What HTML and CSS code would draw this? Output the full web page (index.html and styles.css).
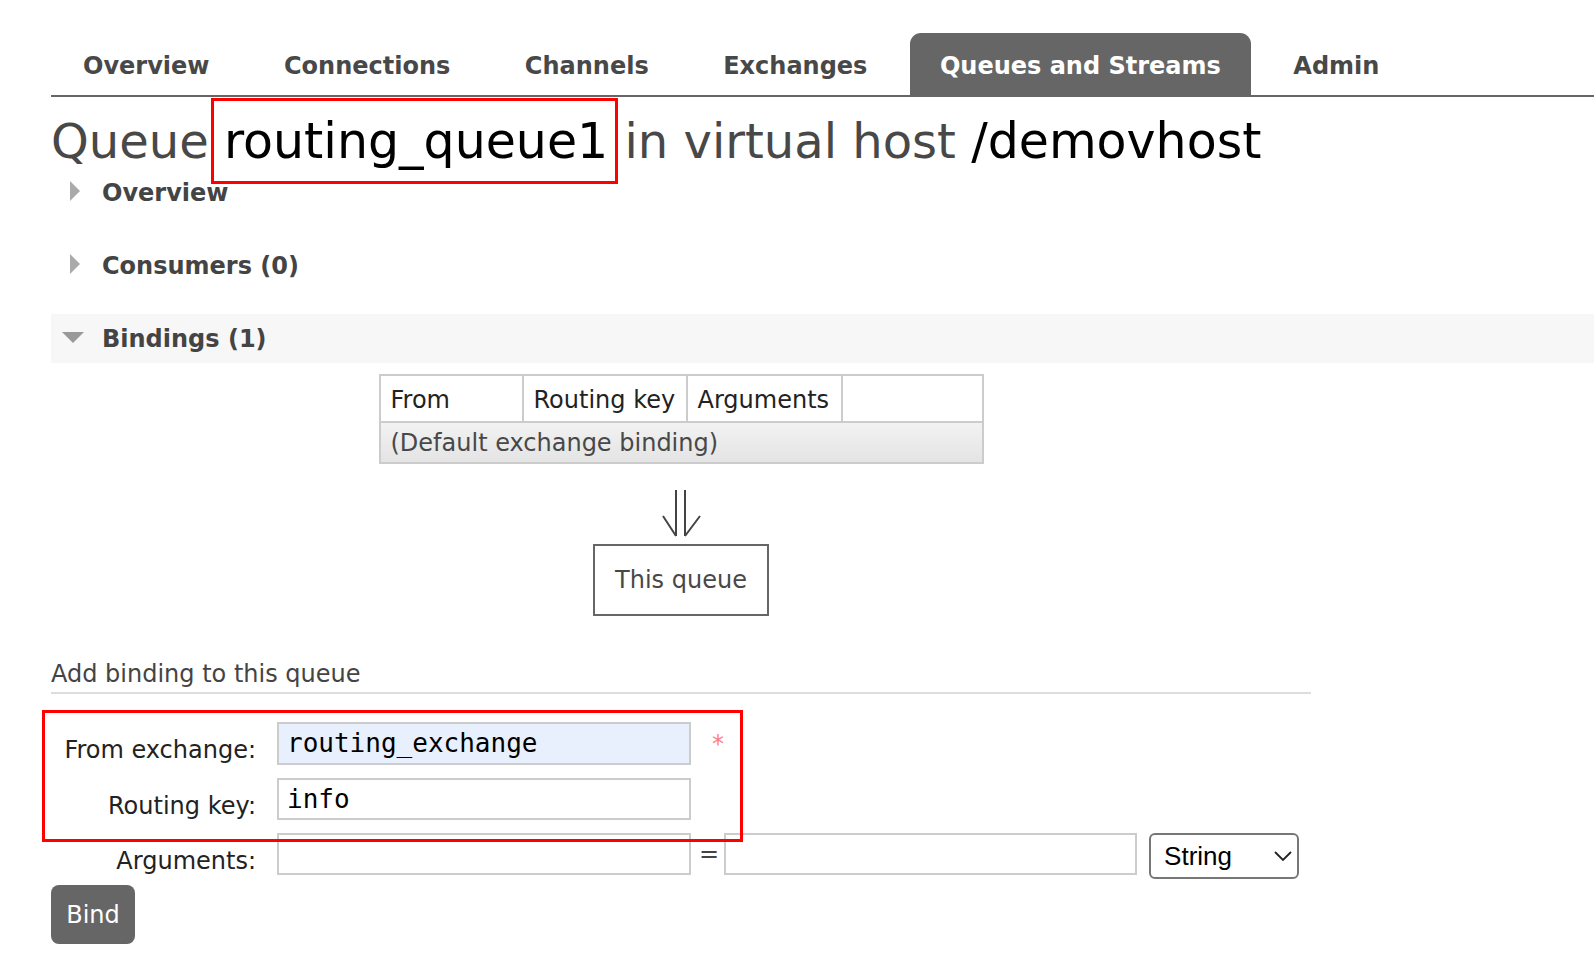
FILE: index.html
```html
<!DOCTYPE html>
<html lang="en">
<head>
<meta charset="utf-8">
<title>Queue routing_queue1</title>
<link rel="stylesheet" href="styles.css">
</head>
<body>
<div class="page">
  <nav class="tabs">
    <a class="tab">Overview</a>
    <a class="tab">Connections</a>
    <a class="tab">Channels</a>
    <a class="tab">Exchanges</a>
    <a class="tab active">Queues and Streams</a>
    <a class="tab">Admin</a>
  </nav>

  <h1 class="title"><span class="muted">Queue</span> <span class="hl">routing_queue1</span> <span class="muted">in virtual host</span> <span class="vh">/demovhost</span></h1>

  <div class="sections">
    <div class="section-head"><span class="tri-right"></span><span>Overview</span></div>
    <div class="section-head"><span class="tri-right"></span><span>Consumers (0)</span></div>
    <div class="section-head open"><span class="tri-down"></span><span>Bindings (1)</span></div>
  </div>

  <div class="bindings">
    <table class="btable">
      <colgroup><col class="c1"><col class="c2"><col class="c3"><col class="c4"></colgroup>
      <thead>
        <tr><th>From</th><th>Routing key</th><th>Arguments</th><th></th></tr>
      </thead>
      <tbody>
        <tr><td colspan="4">(Default exchange binding)</td></tr>
      </tbody>
    </table>
    <svg class="arrow" width="42" height="48" viewBox="0 0 42 48">
      <path d="M16 1 V47 M25 1 V47 M3 27 L16 47 M40 27 L25 47" fill="none" stroke="#444" stroke-width="2"/>
    </svg>
    <div class="this-queue">This queue</div>

    <h3 class="add-title">Add binding to this queue</h3>

    <form class="bind-form">
      <div class="hl-group">
        <div class="row">
          <label class="lbl">From exchange:</label>
          <input class="inp filled" type="text" value="routing_exchange">
          <span class="req">*</span>
        </div>
        <div class="row">
          <label class="lbl">Routing key:</label>
          <input class="inp" type="text" value="info">
        </div>
      </div>
      <div class="row">
        <label class="lbl">Arguments:</label>
        <input class="inp" type="text" value="">
        <span class="eq">=</span>
        <input class="inp inp2" type="text" value="">
        <div class="select-wrap">
          <select class="sel"><option>String</option></select>
          <svg class="chev" width="18" height="10" viewBox="0 0 18 10"><path d="M1 1 L9 9 L17 1" fill="none" stroke="#222" stroke-width="1.8"/></svg>
        </div>
      </div>
      <button type="button" class="bind-btn">Bind</button>
    </form>
  </div>
</div>
</body>
</html>
```

FILE: styles.css
```css
* { box-sizing: border-box; }
html, body { margin: 0; padding: 0; background: #fff; }
body {
  font-family: "DejaVu Sans", Verdana, sans-serif;
  font-size: 24px;
  color: #444;
}
.page { padding-left: 51px; }

/* nav tabs */
.tabs {
  display: flex;
  gap: 10.5px;
  margin-top: 33px;
  border-bottom: 2px solid #666;
}
.tab {
  height: 62px;
  display: flex;
  align-items: center;
  padding: 3px 32px 0;
  font-weight: bold;
  font-size: 24px;
  color: #484848;
}
.tab.active {
  background: #666;
  color: #fff;
  border-radius: 11px 11px 0 0;
  padding: 3px 30px 0;
}

/* title */
.title {
  margin: 17px 0 0;
  font-size: 48px;
  line-height: 54px;
  font-weight: normal;
  color: #000;
  white-space: nowrap;
}
.title .muted { color: #484848; }
.title .vh { font-size: 49px; }
.hl { position: relative; font-size: 49px; margin-right: 1px; }
.hl::after {
  content: "";
  position: absolute;
  left: -13px;
  right: -10px;
  top: -15px;
  bottom: -14px;
  border: 3px solid #f00;
}

/* sections */
.sections { margin-top: -1px; }
.section-head {
  height: 49px;
  display: flex;
  align-items: center;
  font-weight: bold;
  color: #444;
  margin-bottom: 24px;
}
.section-head:last-child { margin-bottom: 0; }
.section-head.open { background: #f7f7f7; }
.tri-right {
  width: 0; height: 0;
  margin-left: 19px;
  margin-right: 22px;
  border-top: 10px solid transparent;
  border-bottom: 10px solid transparent;
  border-left: 10px solid #aaa;
  margin-top: -4px;
}
.tri-down {
  width: 0; height: 0;
  margin-left: 11px;
  margin-right: 18px;
  border-left: 11px solid transparent;
  border-right: 11px solid transparent;
  border-top: 11px solid #999;
  margin-top: -2px;
}

/* bindings */
.bindings { width: 1260px; }
.btable {
  margin: 11px auto 0;
  width: 603px;
  table-layout: fixed;
  border-collapse: collapse;
  border: 2px solid #ccc;
}
.btable .c1 { width: 143px; }
.btable .c2 { width: 164px; }
.btable .c3 { width: 155px; }
.btable .c4 { width: 141px; }
.btable th {
  height: 47px;
  border: 2px solid #ccc;
  text-align: left;
  font-weight: normal;
  color: #222;
  padding: 3px 10px 0;
  white-space: nowrap;
}
.btable td {
  height: 41px;
  padding: 0 10px;
  color: #484848;
  background: linear-gradient(#f2f2f2, #e4e4e4);
  border: 2px solid #ccc;
  white-space: nowrap;
}
.arrow {
  display: block;
  margin: 25px auto 0;
}
.this-queue {
  width: 176px;
  height: 72px;
  margin: 7px auto 0;
  border: 2px solid #666;
  display: flex;
  align-items: center;
  justify-content: center;
  color: #484848;
}
.add-title {
  margin: 44px 0 0;
  font-size: 24px;
  line-height: 28px;
  font-weight: normal;
  color: #444;
  padding-bottom: 4px;
  border-bottom: 2px solid #ddd;
}

/* form */
.bind-form { margin-top: 28px; }
.hl-group { position: relative; }
.hl-group::after {
  content: "";
  position: absolute;
  left: -9px;
  top: -12px;
  width: 695px;
  height: 126px;
  border: 3px solid #f00;
  z-index: 1;
}
.row {
  display: flex;
  align-items: flex-start;
  margin-bottom: 13px;
}
.lbl {
  width: 205px;
  margin-right: 21px;
  text-align: right;
  color: #222;
  line-height: 28px;
  padding-top: 14px;
  white-space: nowrap;
}
.inp {
  width: 414px;
  height: 42px;
  border: 2px solid #ccc;
  padding: 0 8px 1px;
  font-family: "DejaVu Sans Mono", Menlo, monospace;
  font-size: 26px;
  color: #000;
  background: #fff;
  outline: none;
  margin: 0;
}
.inp.filled { background: #e8f0fe; height: 43px; }
.req {
  margin-left: 21px;
  color: #ff8080;
  line-height: 28px;
  padding-top: 8px;
}
.eq {
  margin-left: 8px;
  margin-right: 5px;
  line-height: 42px;
  color: #444;
}
.inp2 { width: 413px; }
.select-wrap {
  position: relative;
  margin-left: 12px;
}
.sel {
  appearance: none;
  -webkit-appearance: none;
  width: 150px;
  height: 46px;
  border: 2px solid #777;
  border-radius: 6px;
  background: #fff;
  font-family: "Liberation Sans", Arial, sans-serif;
  font-size: 26px;
  color: #000;
  padding: 0 0 0 13px;
  margin: 0;
}
.chev {
  position: absolute;
  left: 125px;
  top: 18px;
  pointer-events: none;
}
.bind-btn {
  display: block;
  margin-top: -7px;
  width: 84px;
  height: 59px;
  border: none;
  border-radius: 8px;
  background: #666;
  color: #fff;
  font-family: "DejaVu Sans", Verdana, sans-serif;
  font-size: 24px;
  padding: 0 0 0;
}
```
